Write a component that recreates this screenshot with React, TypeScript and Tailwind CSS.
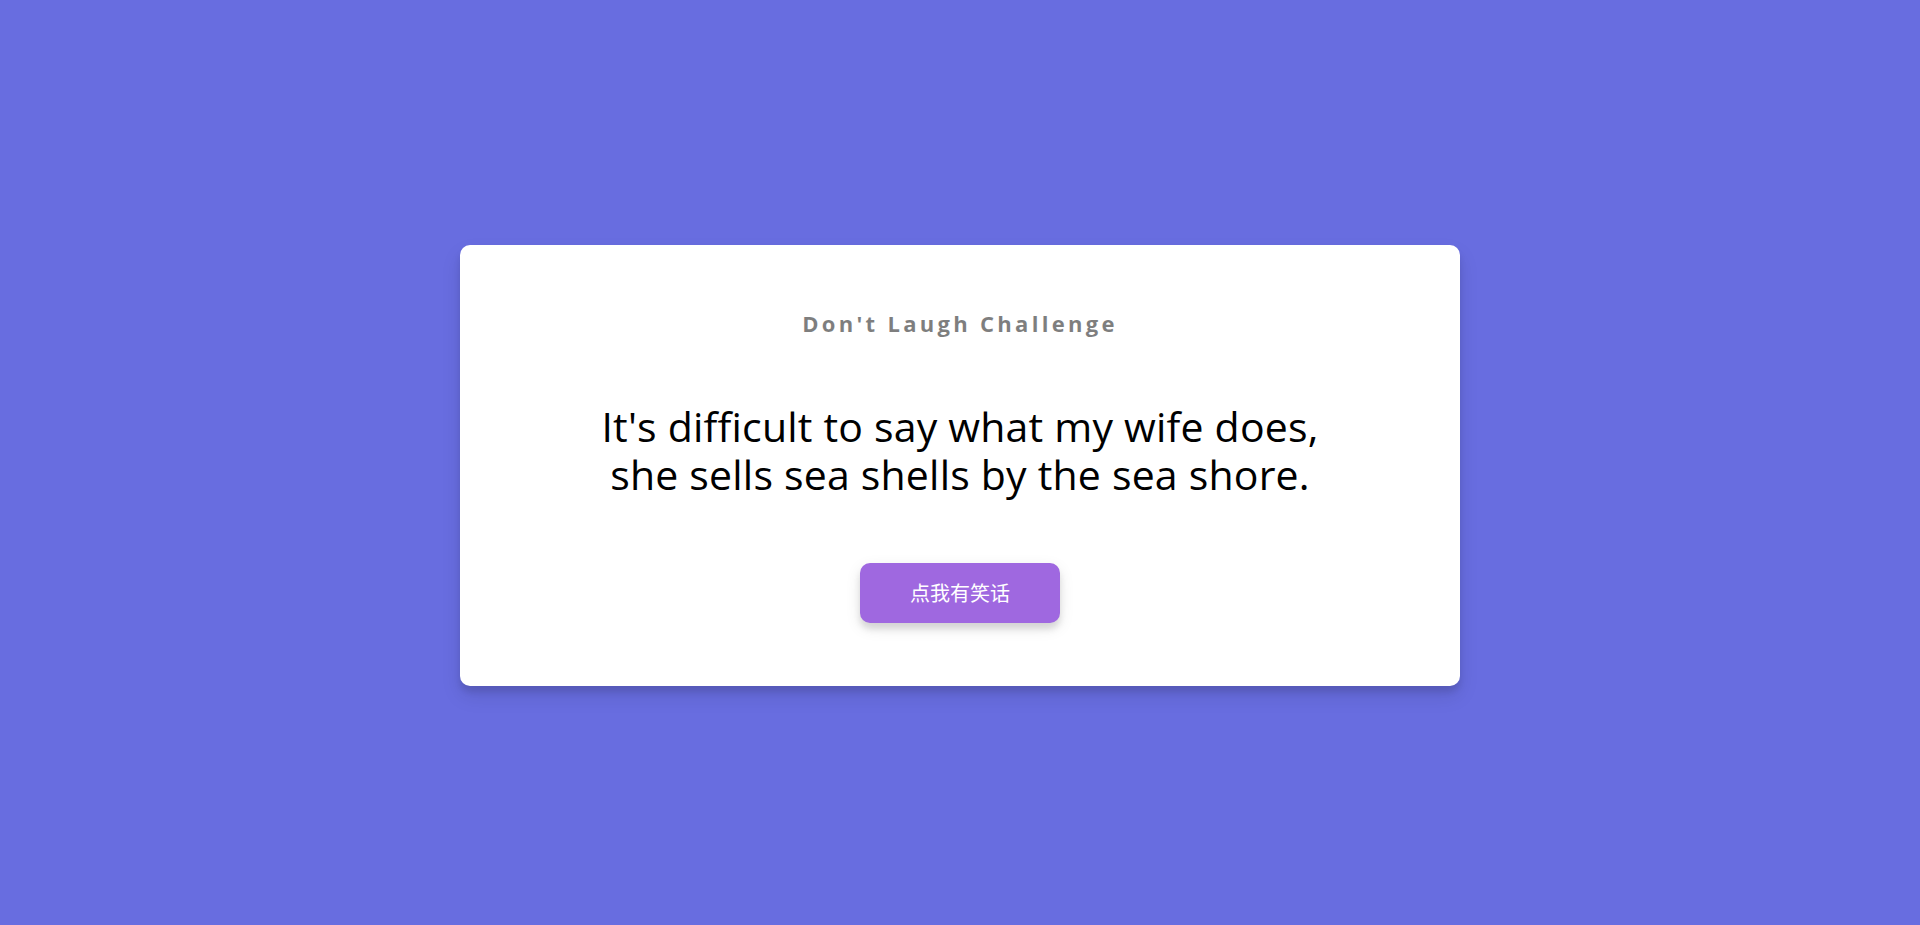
import React from 'react';

const App: React.FC = () => {
  return (
    <div className="min-h-screen w-full flex items-center justify-center bg-[#686de0] font-['Open_Sans','Noto_Sans_CJK_SC',sans-serif]">
      {/* Card */}
      <div className="mt-[5px] w-[1000px] rounded-[10px] bg-white px-5 pt-[63px] pb-[63px] flex flex-col items-center text-center shadow-[0_10px_20px_rgba(0,0,0,0.1),0_6px_6px_rgba(0,0,0,0.1)]">
        <h3 className="m-0 mb-[64px] text-[22px] leading-[30px] font-bold tracking-[3.3px] text-black opacity-50">
          Don't Laugh Challenge
        </h3>

        <div className="mb-[65px] max-w-[800px] text-[41px] leading-[48px] tracking-[0.2px] text-black">
          <p>It's difficult to say what my wife does,</p>
          <p>she sells sea shells by the sea shore.</p>
        </div>

        <button className="w-[200px] h-[60px] rounded-[10px] bg-[#9f68e0] text-white text-[20px] font-['Noto_Sans_CJK_SC',sans-serif] shadow-[0_5px_15px_rgba(0,0,0,0.1),0_6px_6px_rgba(0,0,0,0.1)] cursor-pointer">
          点我有笑话
        </button>
      </div>
    </div>
  );
};

export default App;
